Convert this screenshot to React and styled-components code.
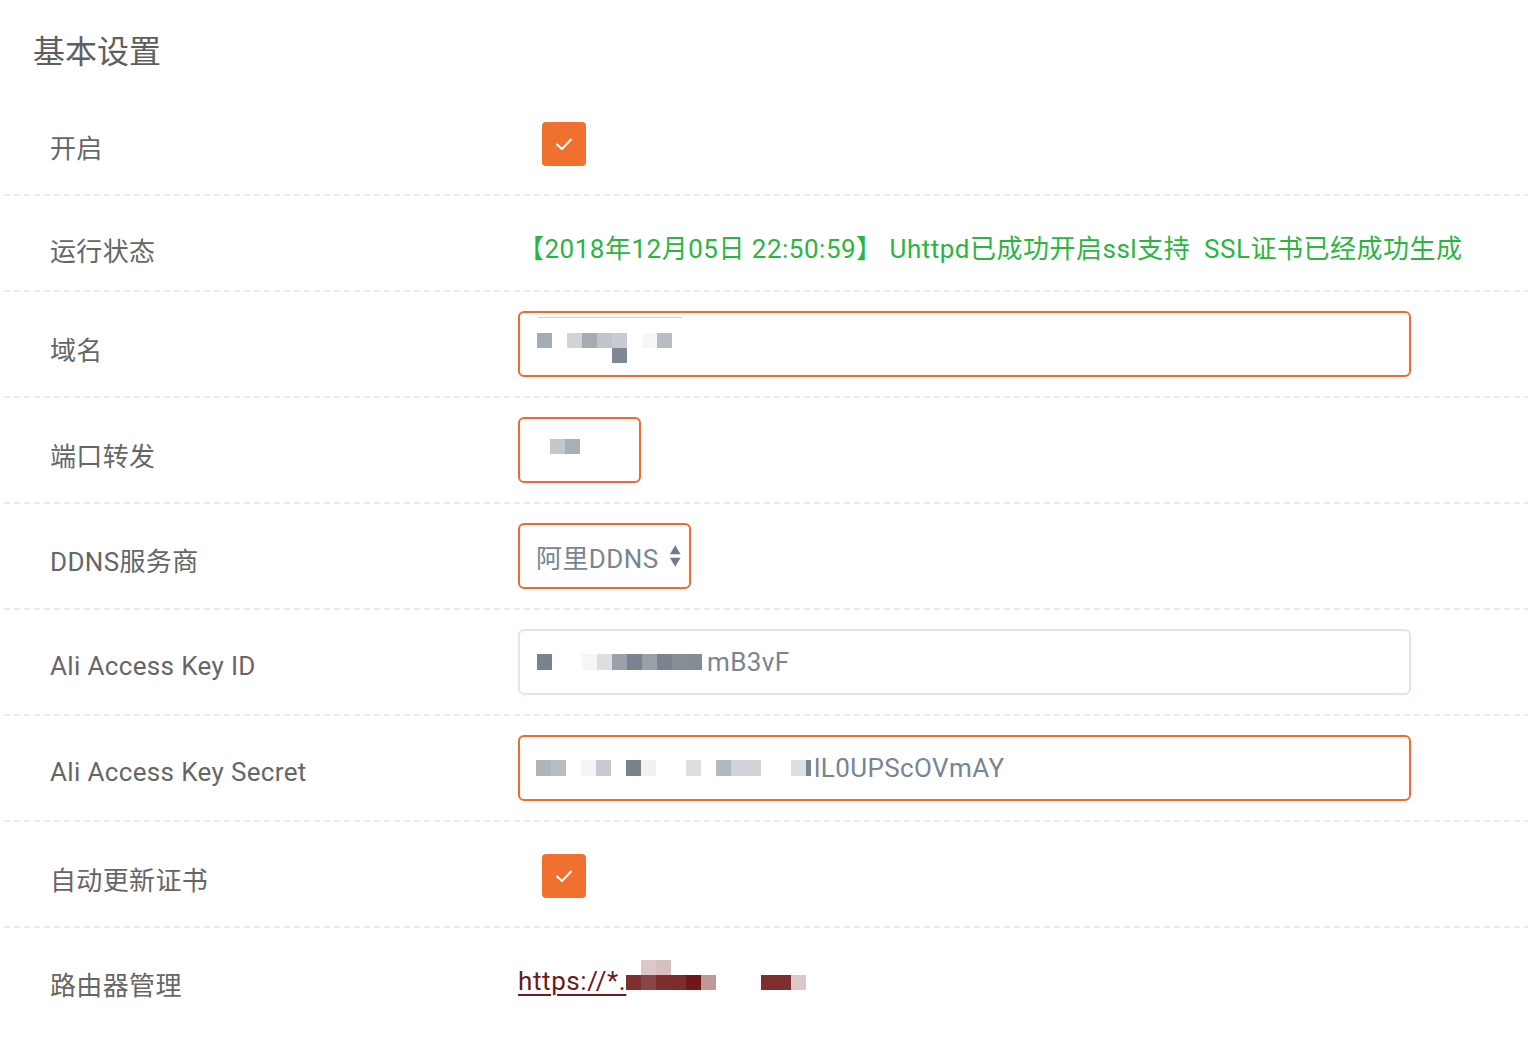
import React from "react";
import styled, { createGlobalStyle } from "styled-components";

const Global = createGlobalStyle`
  html, body { margin: 0; padding: 0; background: #fff; }
  body { font-family: Roboto, "Noto Sans CJK SC", sans-serif; }
`;

const Page = styled.div`
  width: 1528px;
  min-height: 1064px;
  background: #fff;
  padding-left: 4px;
  box-sizing: border-box;
  font-family: Roboto, "Noto Sans CJK SC", sans-serif;
`;

const Title = styled.h2`
  margin: 0;
  height: 97px;
  padding-left: 29px;
  padding-bottom: 0;
  display: flex;
  align-items: center;
  box-sizing: border-box;
  font-size: 32px;
  font-weight: 400;
  color: #5e5e5e;
`;

const Row = styled.div`
  display: flex;
  align-items: center;
  height: ${(p) => p.$h}px;
  padding-bottom: ${(p) => (p.$last ? 0 : 2)}px;
  box-sizing: border-box;
  background: ${(p) =>
    p.$last
      ? "none"
      : "repeating-linear-gradient(to right, #ebebeb 0 6px, transparent 6px 10px) left bottom / 100% 2px no-repeat"};
`;

const Label = styled.div`
  width: 514px;
  flex: none;
  padding-left: 46px;
  padding-top: ${(p) => p.$pt ?? 8}px;
  box-sizing: border-box;
  font-size: 26px;
  color: #666;
  letter-spacing: 0.35px;
`;

const Control = styled.div`
  flex: 1;
  display: flex;
  align-items: center;
`;

const CheckBox = styled.div`
  width: 44px;
  height: 44px;
  margin-left: 24px;
  margin-top: ${(p) => p.$mt ?? 0}px;
  border-radius: 4px;
  background: #f07030;
  display: flex;
  align-items: center;
  justify-content: center;
`;

const Status = styled.div`
  padding-top: 6px;
  font-size: 26px;
  color: #2bb540;
  white-space: pre;
  letter-spacing: 0.5px;
`;

const Field = styled.div`
  position: relative;
  width: ${(p) => p.$w}px;
  height: 66px;
  box-sizing: border-box;
  border: 2px solid ${(p) => (p.$soft ? "#f4dfdf" : "#f06a2d")};
  border-radius: 6px;
  padding-left: ${(p) => p.$pl ?? 16}px;
  display: flex;
  align-items: center;
  font-size: 26px;
  color: #7a8492;
  white-space: nowrap;
  letter-spacing: 0.4px;
`;

const TopHint = styled.div`
  position: absolute;
  left: 18px;
  top: 4px;
  width: 144px;
  height: 1px;
  background: #f8c4ac;
`;

const SelectBox = styled(Field)`
  padding-right: 8px;
  gap: 10px;
`;

const Mosaic = styled.span`
  display: inline-grid;
  grid-template-columns: ${(p) => p.$tpl};
  grid-auto-rows: ${(p) => p.$ch}px;
  margin-top: ${(p) => p.$mt ?? 0}px;
  vertical-align: middle;
  align-self: center;
`;

const Cell = styled.span`
  display: block;
  background: ${(p) => p.$c};
`;

const Link = styled.a`
  display: inline-flex;
  align-items: center;
  font-size: 26px;
  color: #6e1a1a;
  text-decoration: underline;
  text-underline-offset: 4px;
  text-decoration-thickness: 2px;
  letter-spacing: 0.6px;
  padding-top: 0;
`;

function Grid({ cols, cw = 15, ch = 15, tail, cells, mt }) {
  const tpl = `repeat(${cols}, ${cw}px)${tail ? ` ${tail}px` : ""}`;
  return (
    <Mosaic $tpl={tpl} $ch={ch} $mt={mt}>
      {cells.map((c, i) => (
        <Cell key={i} $c={c || "transparent"} />
      ))}
    </Mosaic>
  );
}

const Check = () => (
  <svg width="20" height="16" viewBox="0 0 20 16">
    <polyline points="3,8.5 8,13 17,3.5" fill="none" stroke="#fff" strokeWidth="2" strokeLinecap="round" strokeLinejoin="round" />
  </svg>
);

const Arrows = () => (
  <svg width="14" height="26" viewBox="0 0 14 26">
    <polygon points="7,1 13,11 1,11" fill="#6f7c8a" />
    <polygon points="1,15 13,15 7,25" fill="#6f7c8a" />
  </svg>
);

const domainCells = [
  "#a4abb3", null, "#d0d3d8", "#a4abb3", "#c0c5ca", "#c8ccd2", null, "#f6f8f8", "#b8bdc5",
  null, null, null, null, null, "#808893", null, null, null,
];

const portCells = ["#c4c8cc", "#a8afb6"];

const keyIdCells = [
  "#7a8290", null, null, "#f6f6f6", "#dcdfe2", "#9aa1a9", "#7a8490", "#9aa0a8", "#7a8490", "#868e98", "#848c96",
];

const secretCells = [
  "#b0b5bc", "#b8bcc4", null, "#f4f5f6", "#c8cbd0", null, "#7a8290", "#f0f1f3", null, null,
  "#dcdfe2", null, "#b4b8c0", "#d0d3d8", "#d0d3d8", null, null, "#dcdfe2", "#7a8490",
];

const linkCells = [
  null, "#dcc8c8", "#d8c0c0", null, null, null, null, null, null, null, null, null,
  "#7e3030", "#8a4646", "#7e2c2c", "#7c2c2c", "#701818", "#c09898", null, null, null, "#7e2e2e", "#7e2e2e", "#dcc8c8",
];

export default function App() {
  return (
    <Page>
      <Global />
      <Title>基本设置</Title>

      <Row $h={99}>
        <Label $pt={2}>开启</Label>
        <Control>
          <CheckBox $mt={-4}>
            <Check />
          </CheckBox>
        </Control>
      </Row>

      <Row $h={96}>
        <Label $pt={12}>运行状态</Label>
        <Control>
          <Status>{"【2018年12月05日 22:50:59】 Uhttpd已成功开启ssl支持  SSL证书已经成功生成"}</Status>
        </Control>
      </Row>

      <Row $h={106}>
        <Label>域名</Label>
        <Control>
          <Field $w={893} $pl={17}>
            <TopHint />
            <Grid cols={9} cells={domainCells} mt={8} />
          </Field>
        </Control>
      </Row>

      <Row $h={106}>
        <Label>端口转发</Label>
        <Control>
          <Field $w={123} $pl={30}>
            <Grid cols={2} cells={portCells} mt={-8} />
          </Field>
        </Control>
      </Row>

      <Row $h={106}>
        <Label $pt={6}>DDNS服务商</Label>
        <Control>
          <SelectBox as="div" $w={173}>
            <span>阿里DDNS</span>
            <Arrows />
          </SelectBox>
        </Control>
      </Row>

      <Row $h={106}>
        <Label>Ali Access Key ID</Label>
        <Control>
          <Field $w={893} $soft $pl={17}>
            <Grid cols={11} cells={keyIdCells} ch={16} />
            <span style={{ marginLeft: 5 }}>mB3vF</span>
          </Field>
        </Control>
      </Row>

      <Row $h={106}>
        <Label>Ali Access Key Secret</Label>
        <Control>
          <Field $w={893} $pl={16}>
            <Grid cols={18} tail={5} cells={secretCells} ch={16} />
            <span style={{ marginLeft: 3 }}>lL0UPScOVmAY</span>
          </Field>
        </Control>
      </Row>

      <Row $h={106}>
        <Label>自动更新证书</Label>
        <Control>
          <CheckBox $mt={4}>
            <Check />
          </CheckBox>
        </Control>
      </Row>

      <Row $h={106} $last>
        <Label $pt={4}>路由器管理</Label>
        <Control>
          <Link href="#">
            https://*.
            <Grid cols={12} cells={linkCells} mt={-12} />
          </Link>
        </Control>
      </Row>
    </Page>
  );
}
